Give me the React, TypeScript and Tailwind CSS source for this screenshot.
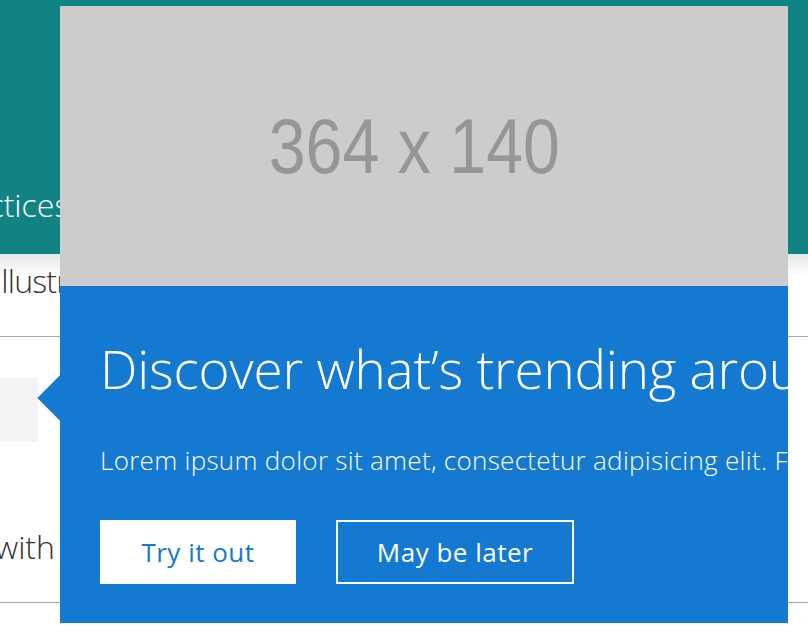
import React from "react";

const sans = { fontFamily: '"Open Sans", "Noto Sans", sans-serif' } as const;

export default function App() {
  return (
    <div className="relative w-[808px] h-[632px] overflow-hidden bg-white" style={sans}>
      {/* background page */}
      <div className="h-[254px] bg-[#128383] overflow-hidden pt-[183px]">
        <div className="whitespace-nowrap text-[32px] leading-[44px] font-light text-white ml-[-60px]">
          practices for teams
        </div>
      </div>
      <div className="bg-[linear-gradient(to_bottom,#e6e6e6,#ffffff_22px)] pt-[5px] overflow-hidden">
        <div className="whitespace-nowrap text-[32px] leading-[44px] font-light text-[#333333] ml-[-6px] tracking-[-0.8px]">
          Illustrations
        </div>
      </div>
      <div className="mt-[33px] h-px bg-[#a6a6a6]" />
      <div className="mt-[41px] w-[38px] h-[64px] bg-[#f4f4f4]" />
      <div className="mt-[83px] whitespace-nowrap text-[32px] leading-[44px] font-light text-[#333333] ml-[-5px]">
        with
      </div>
      <div className="mt-[33px] h-px bg-[#a6a6a6]" />

      {/* teaching bubble */}
      <div className="absolute left-[60px] top-[6px] w-[728px]">
        <div className="absolute left-[-16px] top-[376px] w-[32px] h-[32px] rotate-45 bg-[#1479d0]" />
        <div className="relative h-[280px] bg-[#cccccc] flex items-center justify-center pr-[20px]">
          <span
            className="text-[78px] leading-none text-[#969696] scale-x-[0.85]"
            style={{ fontFamily: '"Liberation Sans", Arial, sans-serif' }}
          >
            364 x 140
          </span>
        </div>
        <div className="relative bg-[#1479d0] overflow-hidden pt-[53px] pb-[39px] px-[40px] whitespace-nowrap text-white">
          <div className="text-[53px] leading-[60px] font-light tracking-[-0.2px]">Discover what’s trending around you</div>
          <div className="mt-[44px] text-[26px] leading-[34px] font-light tracking-[0.3px]">
            Lorem ipsum dolor sit amet, consectetur adipisicing elit. Facere, nulla, ipsum, molestiae eligendi
          </div>
          <div className="mt-[43px] flex gap-[40px]">
            <button className="w-[196px] h-[64px] bg-white text-[#1479d0] text-[26px] font-normal tracking-[0.5px]">Try it out</button>
            <button className="w-[238px] h-[64px] border-2 border-white text-white text-[26px] font-normal tracking-[0.5px]">May be later</button>
          </div>
        </div>
      </div>
    </div>
  );
}
